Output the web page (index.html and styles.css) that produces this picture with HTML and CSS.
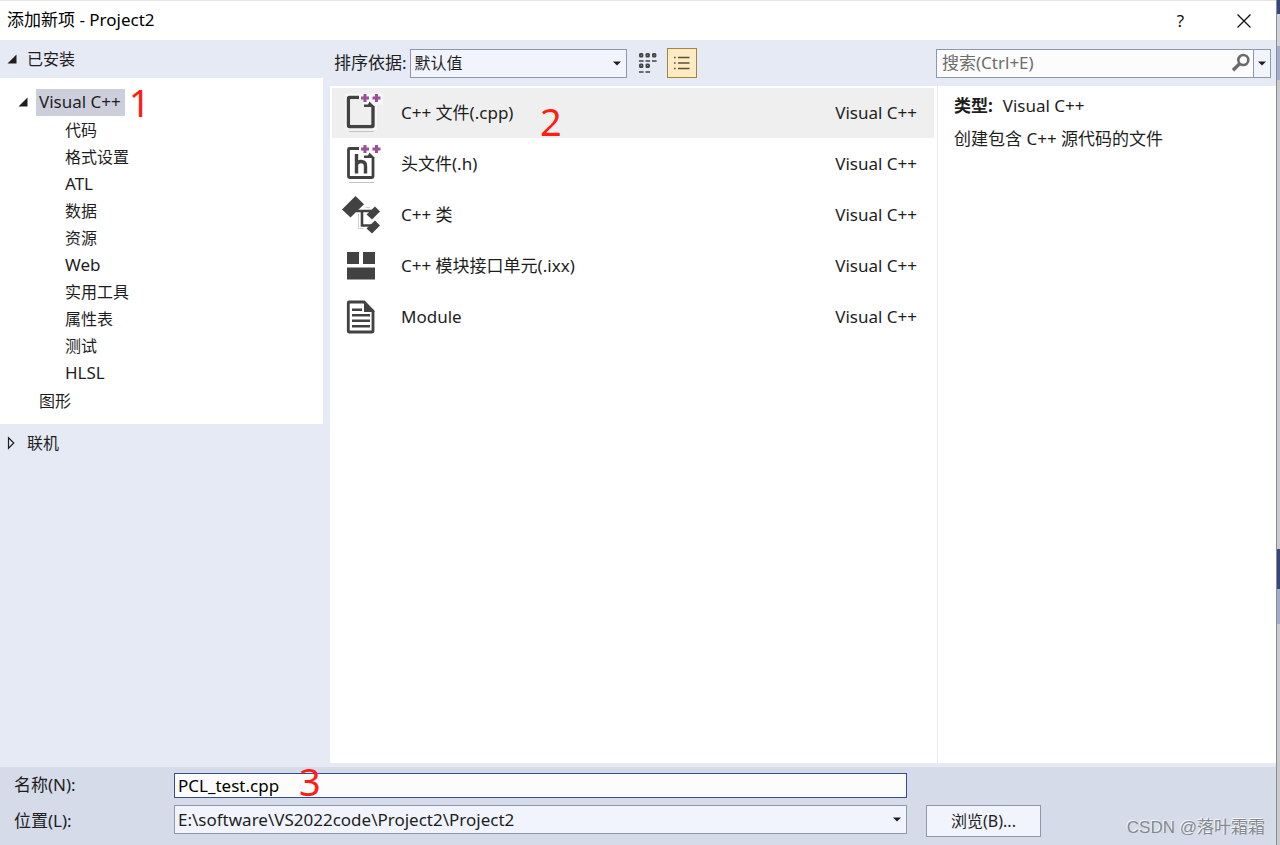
FILE: index.html
```html
<!DOCTYPE html>
<html lang="zh-CN">
<head>
<meta charset="utf-8">
<title>添加新项 - Project2</title>
<link rel="stylesheet" href="styles.css">
</head>
<body>
<div class="desktop">
  <div class="dialog" role="dialog" aria-labelledby="dialog-title">
    <header class="titlebar">
      <h1 class="title" id="dialog-title">添加新项 - Project2</h1>
      <button class="window-button" type="button" aria-label="帮助">?</button>
      <button class="window-button" type="button" aria-label="关闭">
        <svg width="16" height="16" viewBox="0 0 16 16"><path d="M1.5 1.5l13 13M14.5 1.5l-13 13" stroke="#111" stroke-width="1.3" fill="none"/></svg>
      </button>
    </header>

    <div class="workspace">
      <nav class="sidebar" aria-label="模板类别">
        <button class="section" type="button" aria-expanded="true">
          <svg class="arrow" width="10" height="10" viewBox="0 0 10 10"><path d="M9.5.5v9H.5z" fill="#1e1e1e"/></svg>已安装
        </button>
        <div class="tree">
          <div class="branch">
            <svg class="arrow" width="10" height="10" viewBox="0 0 10 10"><path d="M9.5.5v9H.5z" fill="#1e1e1e"/></svg>
            <button class="node node-latin node-selected" type="button" aria-expanded="true">Visual C++</button>
            <span class="mark mark-one">1</span>
          </div>
          <ul class="children">
            <li><button class="node" type="button">代码</button></li>
            <li><button class="node" type="button">格式设置</button></li>
            <li><button class="node node-latin" type="button">ATL</button></li>
            <li><button class="node" type="button">数据</button></li>
            <li><button class="node" type="button">资源</button></li>
            <li><button class="node node-latin" type="button">Web</button></li>
            <li><button class="node" type="button">实用工具</button></li>
            <li><button class="node" type="button">属性表</button></li>
            <li><button class="node" type="button">测试</button></li>
            <li><button class="node node-latin" type="button">HLSL</button></li>
          </ul>
          <div class="leaf"><button class="node" type="button">图形</button></div>
        </div>
        <button class="section" type="button" aria-expanded="false">
          <svg class="arrow" width="10" height="14" viewBox="0 0 10 14"><path d="M1.5 1.8v10.4L6.8 7z" fill="none" stroke="#1e1e1e" stroke-width="1.2"/></svg>联机
        </button>
      </nav>

      <main class="content">
        <div class="toolbar">
          <label class="sort-label" for="sort">排序依据:</label>
          <div class="select-wrap sort-wrap">
            <select class="select sort-select" id="sort"><option>默认值</option></select>
            <svg class="caret" width="8" height="5" viewBox="0 0 8 5"><path d="M0 .5h8L4 4.5z" fill="#1e1e1e"/></svg>
          </div>
          <button class="view" type="button" aria-label="小图标">
            <svg width="20" height="22" viewBox="0 0 20 22" fill="none" stroke="#424242" stroke-width="1.8">
              <rect x="1.900" y="1.900" width="2.600" height="2.600" rx=".6"/><rect x="8.400" y="1.900" width="2.600" height="2.600" rx=".6"/><rect x="14.900" y="1.900" width="2.600" height="2.600" rx=".6"/>
              <rect x="1.900" y="12.400" width="2.600" height="2.600" rx=".6"/><rect x="8.400" y="12.400" width="2.600" height="2.600" rx=".6"/>
              <path d="M1 9h4.600M7.500 9h4.600M14 9h4.600M1 20h4.600M7.500 20h4.600" stroke-width="1.400"/>
            </svg>
          </button>
          <button class="view view-active" type="button" aria-label="列表" aria-pressed="true">
            <svg width="18" height="16" viewBox="0 0 18 16" fill="none" stroke="#5a5037" stroke-width="1.5"><path d="M1 2.500h1.600M1 8h1.600M1 13.500h1.600M5 2.500h11.500M5 8h11.500M5 13.500h11.500"/></svg>
          </button>
          <div class="search">
            <input class="search-input" type="text" placeholder="搜索(Ctrl+E)" aria-label="搜索">
            <svg class="search-icon" width="20" height="20" viewBox="0 0 20 20" fill="none" stroke="#6b6b6b"><circle cx="12.300" cy="7" r="5" stroke-width="2.600"/><path d="M8.600 10.700L2 17.300" stroke-width="3.400"/></svg>
            <button class="search-menu" type="button" aria-label="搜索选项">
              <svg width="8" height="5" viewBox="0 0 8 5"><path d="M0 .5h8L4 4.500z" fill="#1e1e1e"/></svg>
            </button>
          </div>
        </div>

        <div class="panels">
          <div class="list">
            <button class="item item-selected" type="button">
              <svg class="item-icon" width="42" height="42" viewBox="0 0 42 42">
                <path d="M4 1.500h38v11h-6V37.500H4z" fill="#f8f8f8"/>
                <path d="M8 39.500h25" stroke="#c4c4c4" fill="none"/>
                <path d="M18 5.500H8.500Q7.500 5.500 7.500 6.500v27q0 1 1 1h22.500q1 0 1-1V14.500" fill="none" stroke="#424242" stroke-width="3.400"/>
                <path d="M9.200 7.200H23v5h7v20.600H9.200z" fill="#efefef"/>
                <path d="M23 12.500h4L28.500 9.500l5.500 5.500H23z" fill="#424242"/>
                <path d="M20 6h8M24 2v8M31.500 6h8M35.500 2v8" stroke="#9b4f96" stroke-width="3"/>
              </svg>
              <span class="item-name">C++ 文件(.cpp)<span class="mark mark-two">2</span></span>
              <span class="item-kind">Visual C++</span>
            </button>
            <button class="item" type="button">
              <svg class="item-icon" width="42" height="42" viewBox="0 0 42 42">
                <path d="M8 39.500h25" stroke="#c4c4c4" fill="none"/>
                <path d="M18 5.500H8.500Q7.500 5.500 7.500 6.500v27q0 1 1 1h22.500q1 0 1-1V14.500" fill="none" stroke="#424242" stroke-width="2.800"/>
                <path d="M23 12.500h4L28.500 9.500l5.500 5.500H23z" fill="#424242"/>
                <path d="M15.500 11v19.500M15.500 21.500q1-3 4.500-3 4.500 0 4.500 4.500v7.500" fill="none" stroke="#424242" stroke-width="3.400"/>
                <path d="M20 6h8M24 2v8M31.500 6h8M35.500 2v8" stroke="#9b4f96" stroke-width="3"/>
              </svg>
              <span class="item-name">头文件(.h)</span>
              <span class="item-kind">Visual C++</span>
            </button>
            <button class="item" type="button">
              <svg class="item-icon" width="42" height="42" viewBox="0 0 42 42">
                <path d="M17.500 20v14.500h5M25 13.500h4" fill="none" stroke="#cfcfcf"/>
                <path d="M14.500 2L23 10.200 9.500 23.500 1 15.500z" fill="#424242"/>
                <path d="M15 17h16M21 16v15.500h10" fill="none" stroke="#424242" stroke-width="2.600"/>
                <path d="M34 12.500l5 5-8 8-5.500-5zM34 26.500l5 5-8 8-5.500-5z" fill="#424242"/>
              </svg>
              <span class="item-name">C++ 类</span>
              <span class="item-kind">Visual C++</span>
            </button>
            <button class="item" type="button">
              <svg class="item-icon" width="42" height="42" viewBox="0 0 42 42"><path d="M6 7h12v12H6zM22 7h12v12H22zM6 22.500h28V34.500H6z" fill="#424242"/></svg>
              <span class="item-name">C++ 模块接口单元(.ixx)</span>
              <span class="item-kind">Visual C++</span>
            </button>
            <button class="item" type="button">
              <svg class="item-icon" width="42" height="42" viewBox="0 0 42 42">
                <path d="M23 6H8q-.700 0-.700.700V35.300q0 .700.700.700H31.300q.700 0 .700-.700V15z" fill="none" stroke="#424242" stroke-width="2.800"/>
                <path d="M23 5l11 11H23z" fill="#424242"/>
                <path d="M11 13.800h10M11 19.300h18M11 24.800h18M11 30.300h18" stroke="#424242" stroke-width="2.600"/>
              </svg>
              <span class="item-name">Module</span>
              <span class="item-kind">Visual C++</span>
            </button>
          </div>
          <aside class="details">
            <p class="detail"><strong class="detail-key">类型:</strong>Visual C++</p>
            <p class="detail">创建包含 C++ 源代码的文件</p>
          </aside>
        </div>
      </main>
    </div>

    <footer class="footer">
      <label for="name">名称(N):</label>
      <div class="name-wrap">
        <input class="name-input" id="name" type="text" value="PCL_test.cpp">
        <span class="mark mark-three">3</span>
      </div>
      <label class="place-label" for="place">位置(L):</label>
      <div class="select-wrap place-wrap">
        <select class="select" id="place"><option>E:\software\VS2022code\Project2\Project2</option></select>
        <svg class="caret" width="8" height="5" viewBox="0 0 8 5"><path d="M0 .5h8L4 4.500z" fill="#1e1e1e"/></svg>
      </div>
      <button class="browse" type="button">浏览(B)...</button>
      <span class="watermark">CSDN @落叶霜霜</span>
    </footer>
  </div>
  <div class="backdrop"></div>
</div>
</body>
</html>
```
FILE: styles.css
```css
* { box-sizing: border-box; }

body {
  margin: 0;
  color: #1e1e1e;
  font: 17px/24px "Noto Sans", "Noto Sans CJK SC", sans-serif;
}

button, input, select {
  margin: 0;
  padding: 0;
  border: 0;
  border-radius: 0;
  background: none;
  color: inherit;
  font: inherit;
}

svg { flex: none; display: block; }

.desktop { display: flex; min-height: 100vh; }

.dialog {
  flex: 1;
  display: flex;
  flex-direction: column;
  background: #e6eaf5;
  border-top: 1px solid #e5e5e5;
}

.backdrop {
  width: 4px;
  border-left: 1px solid #8c8c91;
  background: linear-gradient(#34487c 0 14px, #d0d2dc 14px 46px, #a3acca 46px 80px, #c9c9d0 80px 549px, #34487c 549px 589px, #a3acca 589px 624px, #c9c9d0 624px);
}

.titlebar { display: flex; height: 39px; padding-right: 1px; background: #fff; }
.title {
  flex: 1;
  margin: 0;
  padding: 7px;
  color: #000;
  font-size: 17px;
  font-weight: 400;
}
.window-button {
  display: flex;
  align-items: center;
  justify-content: center;
  width: 63px;
  color: #111;
}

.workspace { flex: 1; display: flex; gap: 7px; }

.sidebar { width: 323px; font-size: 16px; }
.section {
  display: flex;
  align-items: center;
  gap: 10px;
  width: 100%;
  height: 38px;
  padding-left: 7px;
}
.tree { background: #fff; padding: 10px 0 9px; }
.branch, .leaf { display: flex; align-items: center; height: 28px; }
.branch { padding-left: 18px; gap: 8px; }
.leaf { padding-left: 39px; }
.children { list-style: none; margin: 0; padding: 0 0 1px 65px; }
.children li { display: flex; align-items: center; height: 27px; }
.node-latin { font-size: 17px; }
.node-selected { height: 27px; padding: 0 4px 0 3px; background: #cccedb; }

.mark {
  color: #ff1e14;
  font-size: 38px;
  line-height: 36px;
}
.branch .mark-one { margin-left: -4px; }

.content { flex: 1; display: flex; flex-direction: column; }

.toolbar {
  display: flex;
  align-items: center;
  height: 46px;
  padding: 0 5px 0 4px;
}
.sort-label { margin-right: 3px; }
.select-wrap { position: relative; display: flex; }
.sort-wrap { width: 217px; }
.select {
  appearance: none;
  width: 100%;
  height: 29px;
  padding: 0 24px 0 4px;
  border: 1px solid #8e98ac;
  background: #f1f4fd;
}
.sort-select { font-size: 16px; }
.caret { position: absolute; right: 6px; top: 12px; }
.view {
  display: flex;
  align-items: center;
  justify-content: center;
  width: 30px;
  height: 30px;
  margin-left: 6px;
}
.view-active {
  margin-left: 4px;
  border: 1px solid #a5843c;
  background: #feebc3;
}
.search {
  display: flex;
  align-items: center;
  width: 335px;
  height: 29px;
  margin-left: auto;
  border: 1px solid #8e98ac;
  background: #fcfcfc;
}
.search-input { flex: 1; min-width: 0; padding-left: 5px; }
.search-input::placeholder { color: #6d6d6d; opacity: 1; }
.search-icon { margin-right: 2px; }
.search-menu {
  display: flex;
  align-items: center;
  justify-content: center;
  width: 17px;
  height: 27px;
  border-left: 1px solid #8e98ac;
  background: #f1f4fd;
}

.panels { flex: 1; display: flex; background: #fff; }
.list {
  flex: 1;
  display: flex;
  flex-direction: column;
  gap: 1px;
  padding: 2px 3px 0 2px;
}
.item {
  display: flex;
  align-items: center;
  height: 50px;
  padding: 0 17px 0 9px;
  text-align: left;
}
.item-selected { background: #efefef; }
.item-icon { margin-right: 18px; }
.item-name { flex: 1; position: relative; }
.mark-two { position: absolute; left: 139px; top: 2px; }

.details {
  width: 339px;
  padding: 8px 16px;
  border-left: 1px solid #e6eaf5;
}
.detail { margin: 0 0 9px; }
.detail-key { margin-right: 10px; }

.footer {
  display: grid;
  grid-template-columns: 160px minmax(0, 733px) 134px 1fr;
  grid-template-rows: 24px 32px;
  row-gap: 8px;
  align-items: center;
  margin-top: 4px;
  padding: 6px 11px 8px 14px;
  background: #d5dbe8;
}
.name-wrap { position: relative; display: flex; }
.name-input {
  width: 100%;
  height: 25px;
  padding: 0 3px;
  border: 1px solid #34508c;
  background: #fcfcfc;
  color: #000;
}
.mark-three { position: absolute; left: 125px; top: -10px; }
.place-label { grid-area: 2 / 1; }
.place-wrap { grid-area: 2 / 2; align-self: start; }
.place-wrap .select { padding-left: 3px; }
.browse {
  grid-area: 2 / 3;
  height: 32px;
  margin-left: 19px;
  border: 1px solid #8e98ac;
  background: #f1f4fd;
  font-size: 16px;
}
.watermark {
  grid-area: 2 / 4;
  justify-self: end;
  align-self: end;
  color: #85898f;
  font-family: "Liberation Sans", "Noto Sans CJK SC", sans-serif;
  font-size: 17px;
  line-height: 18px;
  text-shadow: -1px -1px 0 #f3f5f9;
}
```
